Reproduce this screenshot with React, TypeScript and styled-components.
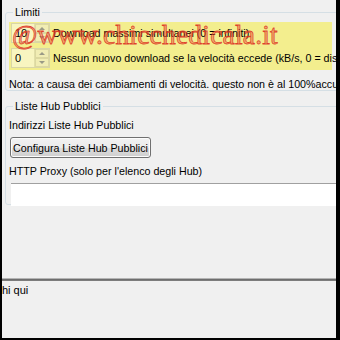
import React from 'react';
import styled, { createGlobalStyle } from 'styled-components';

const GlobalStyle = createGlobalStyle`
  html, body {
    margin: 0;
    padding: 0;
    background: #000;
  }
  body {
    font-family: 'Liberation Sans', Arial, sans-serif;
    font-size: 10.7px;
    color: #000;
  }
`;

const Frame = styled.div`
  width: 340px;
  height: 340px;
  box-sizing: border-box;
  border-left: 2px solid #000;
  border-right: 4px solid #000;
  border-bottom: 2px solid #000;
  background: #f0f0f0;
  overflow: hidden;
  display: flex;
  flex-direction: column;
`;

const Panel = styled.div`
  padding: 5px 0 0 3px;
  flex: 1;
`;

const Group = styled.fieldset<{ $height: number; $gap: number }>`
  margin: ${(p) => p.$gap}px -12px 0 0;
  padding: 0 0 0 3px;
  height: ${(p) => p.$height}px;
  box-sizing: border-box;
  border: 1px solid #d5dfe5;
  border-radius: 3px;
  min-width: 0;
`;

const Legend = styled.legend`
  padding: 0 2px;
  margin-left: 4px;
  line-height: 14px;
`;

const Highlight = styled.div`
  position: relative;
  margin: 3px 15px 0 0;
  padding: 1px 0 2px 2px;
  background: #f3ee8e;
  display: flex;
  flex-direction: column;
  gap: 5px;
`;

const SpinRow = styled.div`
  display: flex;
  align-items: center;
  gap: 3px;
  white-space: nowrap;
`;

const SpinBox = styled.div`
  flex-shrink: 0;
  width: 39px;
  height: 20px;
  box-sizing: border-box;
  border: 1px solid #d9d6a6;
  background: #f8f5c0;
  display: flex;
  align-items: center;
  justify-content: space-between;
  padding-left: 3px;
  font-size: 11px;
`;

const SpinArrows = styled.div`
  width: 14px;
  height: 18px;
  display: flex;
  flex-direction: column;
  border-left: 1px solid #e2dfa8;
`;

const Arrow = styled.div<{ $up?: boolean }>`
  flex: 1;
  display: flex;
  align-items: center;
  justify-content: center;
  background: #f1edb4;
  border: 1px solid #dcd8a0;
  &::after {
    content: '';
    border-left: 3px solid transparent;
    border-right: 3px solid transparent;
    ${(p) => (p.$up ? 'border-bottom' : 'border-top')}: 3px solid #9a9a86;
  }
`;

const Watermark = styled.div`
  position: absolute;
  left: 3px;
  top: -3px;
  font-family: 'Liberation Serif', 'Times New Roman', serif;
  font-size: 27.5px;
  color: rgba(235, 95, 60, 0.45);
  -webkit-text-stroke: 0.8px rgba(220, 45, 30, 0.85);
  white-space: nowrap;
  pointer-events: none;
  letter-spacing: 0.2px;
`;

const Line = styled.div<{ $mt?: number }>`
  margin-top: ${(p) => p.$mt ?? 0}px;
  white-space: nowrap;
  line-height: 14px;
`;

const Button = styled.button`
  display: block;
  margin: 5px 0 0 1px;
  height: 21px;
  width: 141px;
  padding: 0;
  font: inherit;
  white-space: nowrap;
  color: #000;
  border: 1px solid #707070;
  border-radius: 3px;
  background: linear-gradient(#f2f2f2 0%, #ebebeb 50%, #dddddd 51%, #cfcfcf 100%);
  box-shadow: inset 0 0 0 1px #fcfcfc;
`;

const TextBox = styled.div`
  margin: 5px 0 0 2px;
  height: 23px;
  box-sizing: border-box;
  background: #fff;
  border-top: 1px solid #a0a0a0;
`;

const Status = styled.div`
  height: 60px;
  box-sizing: border-box;
  border-top: 1px solid #b4b4b4;
  box-shadow: inset 0 1px 0 #6e6e6e, inset 0 2px 0 #7c7c7c;
  padding: 4px 0 0 0;
  line-height: 14px;
  white-space: nowrap;
  font-size: 11px;
`;

export default function App() {
  return (
    <>
      <GlobalStyle />
      <Frame>
        <Panel>
          <Group $height={86} $gap={0}>
            <Legend>Limiti</Legend>
            <Highlight>
              <SpinRow>
                <SpinBox>
                  10
                  <SpinArrows>
                    <Arrow $up />
                    <Arrow />
                  </SpinArrows>
                </SpinBox>
                Download massimi simultanei (0 = infiniti)
              </SpinRow>
              <SpinRow>
                <SpinBox>
                  0
                  <SpinArrows>
                    <Arrow $up />
                    <Arrow />
                  </SpinArrows>
                </SpinBox>
                Nessun nuovo download se la velocità eccede (kB/s, 0 = disabilitato)
              </SpinRow>
              <Watermark>@www.chicchedicala.it</Watermark>
            </Highlight>
            <Line $mt={7}>
              Nota: a causa dei cambiamenti di velocità. questo non è al 100%accurato
            </Line>
          </Group>
          <Group $height={106} $gap={8}>
            <Legend>Liste Hub Pubblici</Legend>
            <Line $mt={5}>Indirizzi Liste Hub Pubblici</Line>
            <Button>Configura Liste Hub Pubblici</Button>
            <Line $mt={6}>HTTP Proxy (solo per l'elenco degli Hub)</Line>
            <TextBox />
          </Group>
        </Panel>
        <Status>hi qui</Status>
      </Frame>
    </>
  );
}
